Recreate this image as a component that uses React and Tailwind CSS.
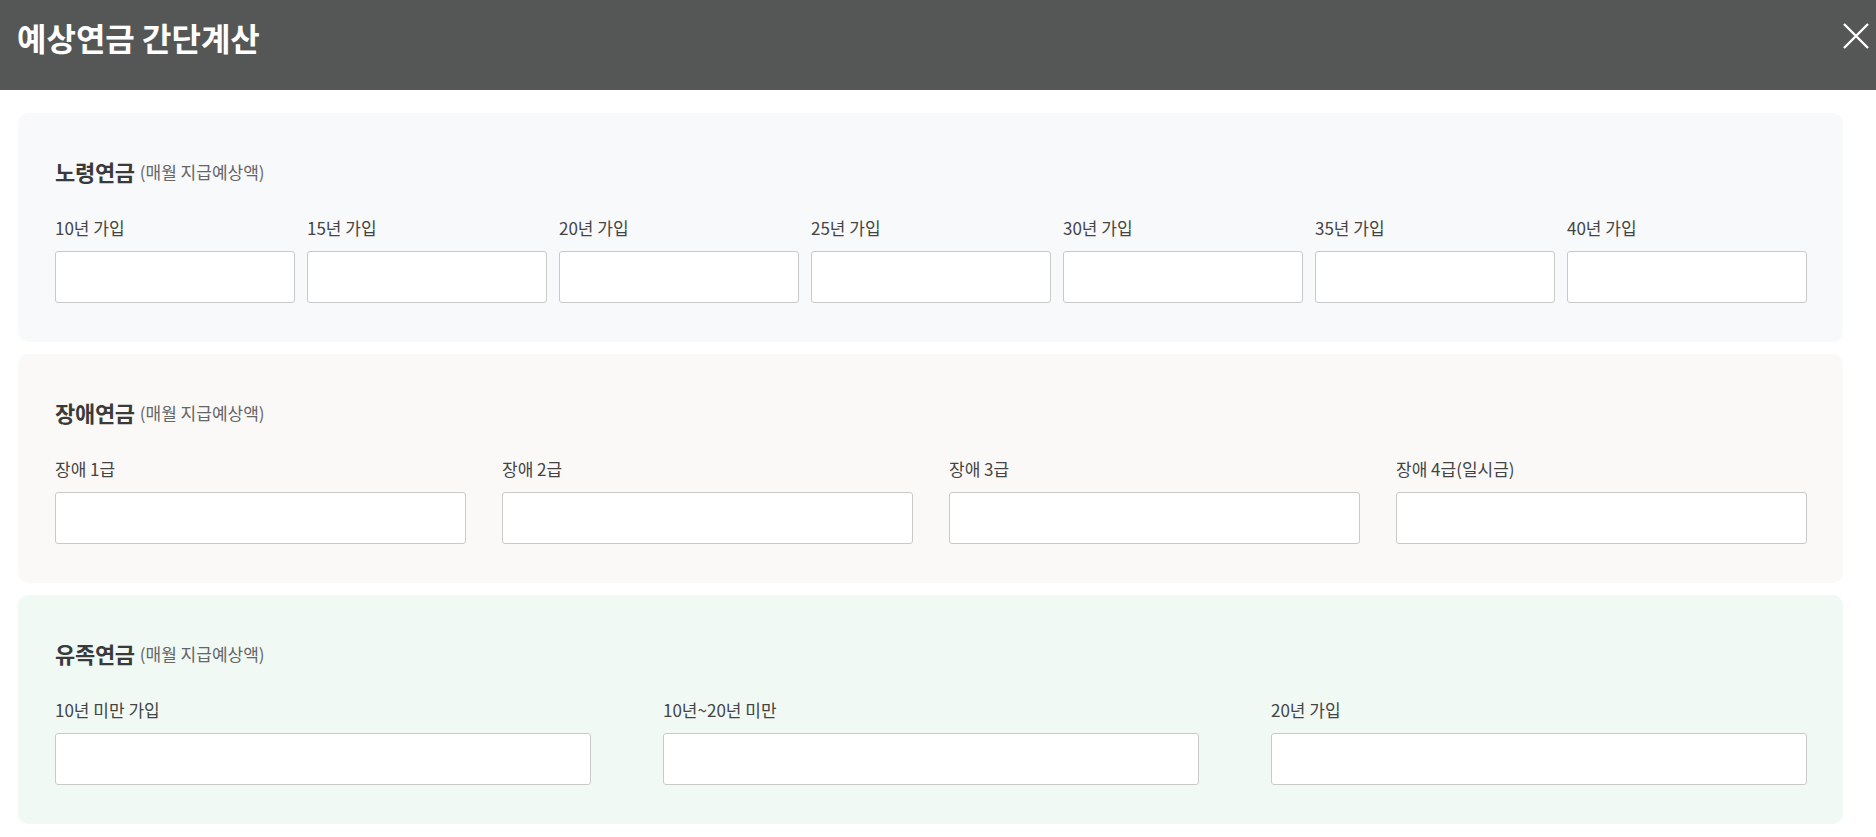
const sections = [
  {
    title: '노령연금',
    bg: 'bg-[#f8f9fb]',
    grid: 'grid grid-cols-7 gap-x-[12px]',
    fields: ['10년 가입', '15년 가입', '20년 가입', '25년 가입', '30년 가입', '35년 가입', '40년 가입'],
  },
  {
    title: '장애연금',
    bg: 'bg-[#faf9f7]',
    grid: 'grid grid-cols-4 gap-x-[36px]',
    fields: ['장애 1급', '장애 2급', '장애 3급', '장애 4급(일시금)'],
  },
  {
    title: '유족연금',
    bg: 'bg-[#f0f9f4]',
    grid: 'grid grid-cols-3 gap-x-[72px]',
    fields: ['10년 미만 가입', '10년~20년 미만', '20년 가입'],
  },
];

function Section({ title, bg, grid, fields }) {
  return (
    <section className={`${bg} rounded-[10px] pt-[44px] pb-[39px] pl-[37px] pr-[36px]`}>
      {/* ── heading ── */}
      <h2 className="h-[28px] flex items-center gap-[5px] text-[#3a3a3a]">
        <span className="text-[22px] font-bold tracking-[-0.3px]">{title}</span>
        <span className="text-[17px] text-[#666] mt-[2px]">(매월 지급예상액)</span>
      </h2>

      {/* ── inputs ── */}
      <div className={`${grid} mt-[31px]`}>
        {fields.map((label) => (
          <label key={label} className="flex flex-col">
            <span className="h-[24px] leading-[24px] text-[17px] text-[#444]">{label}</span>
            <input
              type="text"
              className="mt-[11px] h-[52px] w-full rounded-[3px] border border-[#c9c9c9] bg-white px-3 outline-none"
            />
          </label>
        ))}
      </div>
    </section>
  );
}

export default function App() {
  return (
    <div
      className="w-full h-[837px] bg-white overflow-hidden"
      style={{ fontFamily: '"Noto Sans CJK KR", "Noto Sans", sans-serif' }}
    >
      {/* ── Header ── */}
      <header className="h-[90px] bg-[#555756] flex items-start justify-between pl-[17px] pr-[7px]">
        <h1 className="mt-[17px] text-[32px] leading-[40px] font-bold text-white">
          예상연금 간단계산
        </h1>
        <button className="mt-[23px] text-white" aria-label="닫기">
          <svg width="26" height="26" viewBox="0 0 26 26" fill="none" stroke="currentColor" strokeWidth="2.4">
            <path d="M1 1 L25 25 M25 1 L1 25" />
          </svg>
        </button>
      </header>

      {/* ── Body ── */}
      <div className="pt-[23px] pl-[18px] pr-[33px] flex flex-col gap-[12px]">
        {sections.map((s) => (
          <Section key={s.title} {...s} />
        ))}
      </div>
    </div>
  );
}
